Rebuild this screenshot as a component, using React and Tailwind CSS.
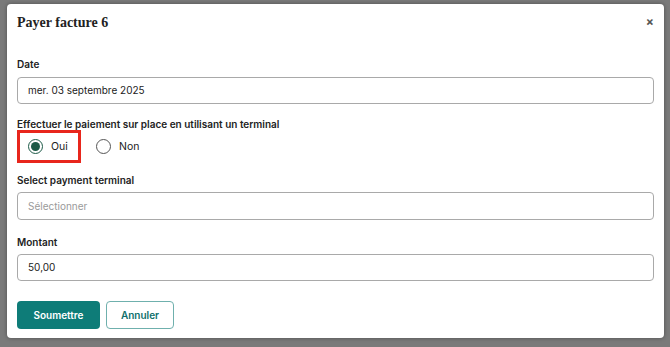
const SANS = "font-['Inter','Liberation_Sans',sans-serif]";

function Label({ children, mb = "mb-[5px]" }) {
  return (
    <label className={`block text-[10px] leading-4 font-semibold text-[#222] ${mb}`}>
      {children}
    </label>
  );
}

function TextBox({ value, placeholder, h = "h-[27px]" }) {
  return (
    <div
      className={`${h} border border-[#a9a9a9] rounded-[4px] flex items-center px-[10px] text-[10px] ${
        value ? "text-[#222]" : "text-[#9a9a9a]"
      }`}
    >
      {value || placeholder}
    </div>
  );
}

function Radio({ checked, label }) {
  return (
    <div className="flex items-center gap-[8px]">
      <span
        className={`w-[15px] h-[15px] rounded-full border-[1.5px] flex items-center justify-center ${
          checked ? "border-[#1d5a47]" : "border-[#555]"
        }`}
      >
        {checked && <span className="w-[9px] h-[9px] rounded-full bg-[#1d5a47]" />}
      </span>
      <span className="text-[10.5px] text-[#222]">{label}</span>
    </div>
  );
}

export default function App() {
  return (
    <div className={`w-[670px] h-[347px] bg-[#7a7a7a] pl-[7px] pt-[4px] ${SANS}`}>
      <div className="w-[657px] h-[334px] bg-white rounded-[4px] shadow-[0_0_4px_rgba(0,0,0,0.35)] px-[10px] pt-[8px]">
        <div className="flex items-center justify-between h-[20px]">
          <h1 className="font-['Liberation_Serif','DejaVu_Serif',serif] font-bold text-[14px] text-[#222]">
            Payer facture 6
          </h1>
          <span className="text-[12px] font-bold text-[#555] leading-none">×</span>
        </div>

        <div className="mt-[24px]">
          <Label>Date</Label>
          <TextBox value="mer. 03 septembre 2025" />
        </div>

        <div className="mt-[12px]">
          <Label mb="mb-0">Effectuer le paiement sur place en utilisant un terminal</Label>
          <div className="flex items-center gap-[15px] mt-[-2px]">
            <div className="w-[64px] h-[33px] border-[3px] border-[#e8261c] flex items-center pl-[8px]">
              <Radio checked label="Oui" />
            </div>
            <Radio label="Non" />
          </div>
        </div>

        <div className="mt-[9px]">
          <Label mb="mb-[4px]">Select payment terminal</Label>
          <TextBox placeholder="Sélectionner" h="h-[28px]" />
        </div>

        <div className="mt-[14px]">
          <Label mb="mb-[4px]">Montant</Label>
          <TextBox value="50,00" h="h-[27px]" />
        </div>

        <div className="flex gap-[6px] mt-[20px]">
          <button className="h-[28px] w-[83px] rounded-[4px] bg-[#0e7c78] text-white text-[10px] font-semibold">
            Soumettre
          </button>
          <button className="h-[28px] w-[68px] rounded-[4px] border border-[#6fb0ad] text-[#0e6f6b] text-[10px] font-semibold bg-white">
            Annuler
          </button>
        </div>
      </div>
    </div>
  );
}
